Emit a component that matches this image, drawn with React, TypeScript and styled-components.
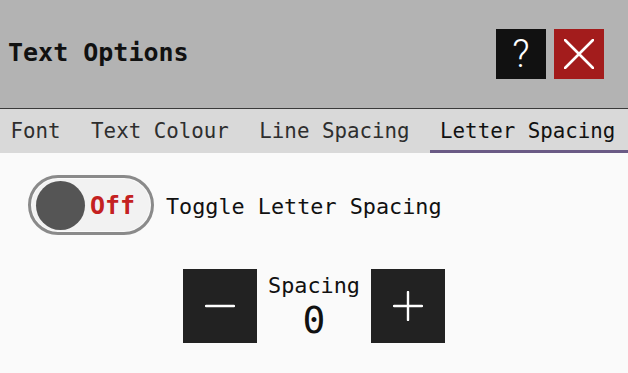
import React, { useState } from "react";
import styled, { createGlobalStyle } from "styled-components";

const Global = createGlobalStyle`
  html, body { margin: 0; padding: 0; background: #fafafa; }
  body { font-family: "DejaVu Sans Mono", "Liberation Mono", monospace; color: #111; }
  * { box-sizing: border-box; }
`;

const Page = styled.div`
  width: 628px;
  height: 373px;
  display: flex;
  flex-direction: column;
  background: #fafafa;
  overflow: hidden;
`;

const Header = styled.header`
  height: 109px;
  flex: none;
  display: flex;
  align-items: center;
  justify-content: space-between;
  padding: 0 24px 0 8px;
  background: #b3b3b3;
  border-bottom: 1px solid #3a3a3a;
`;

const Title = styled.h1`
  margin: 0;
  font-size: 25px;
  font-weight: 700;
  color: #111;
  letter-spacing: 0;
  padding-bottom: 3px;
`;

const HeaderButtons = styled.div`
  display: flex;
  gap: 8px;
`;

const IconButton = styled.button<{ $bg: string }>`
  width: 50px;
  height: 50px;
  border: none;
  padding: 0;
  margin: 0;
  display: flex;
  align-items: center;
  justify-content: center;
  background: ${(p) => p.$bg};
  color: #fff;
  cursor: pointer;
`;

const HelpGlyph = styled.span`
  font-family: "Roboto", "DejaVu Sans", sans-serif;
  font-weight: 300;
  font-size: 38px;
  line-height: 1;
  color: #fff;
`;

const TabBar = styled.nav`
  height: 44px;
  flex: none;
  display: flex;
  gap: 10px;
  background: #d9d9d9;
`;

const Tab = styled.div<{ $active?: boolean }>`
  display: flex;
  align-items: center;
  padding: 3px 10px 0 10.5px;
  font-size: 20.8px;
  color: ${(p) => (p.$active ? "#111" : "#2e2e2e")};
  border-bottom: 3px solid ${(p) => (p.$active ? "#6a5a85" : "transparent")};
  white-space: nowrap;
  flex: ${(p) => (p.$active ? "1" : "none")};
`;

const Body = styled.main`
  flex: 1;
  display: flex;
  flex-direction: column;
  padding: 22px 0 0 28px;
`;

const ToggleRow = styled.div`
  display: flex;
  align-items: center;
  gap: 12px;
`;

const Toggle = styled.button`
  width: 126px;
  height: 60px;
  border: 3px solid #8a8a8a;
  border-radius: 30px;
  background: #f2f2f2;
  box-shadow: inset 0 0 0 1px #fafafa;
  display: flex;
  align-items: center;
  gap: 5px;
  padding: 0 0 0 5px;
  cursor: pointer;
  font-family: inherit;
`;

const Knob = styled.span`
  width: 49px;
  height: 49px;
  border-radius: 50%;
  background: #555;
  flex: none;
`;

const ToggleText = styled.span`
  font-size: 25px;
  font-weight: 700;
  color: #c42121;
`;

const ToggleLabel = styled.span`
  font-size: 21.8px;
  color: #111;
  padding-top: 2px;
`;

const Stepper = styled.div`
  margin: 34px 0 0 -28px;
  display: flex;
  justify-content: center;
  align-items: center;
  gap: 11px;
`;

const StepButton = styled.button`
  width: 74px;
  height: 74px;
  border: none;
  padding: 0;
  background: #222;
  display: flex;
  align-items: center;
  justify-content: center;
  cursor: pointer;
`;

const ValueBox = styled.div`
  width: 92px;
  display: flex;
  flex-direction: column;
  align-items: center;
`;

const ValueLabel = styled.span`
  font-size: 21.8px;
  color: #111;
  line-height: 28px;
`;

const Value = styled.span`
  font-size: 38px;
  color: #111;
  line-height: 40px;
`;

export default function App() {
  const [on, setOn] = useState(false);
  const [spacing, setSpacing] = useState(0);
  return (
    <Page>
      <Global />
      <Header>
        <Title>Text Options</Title>
        <HeaderButtons>
          <IconButton $bg="#111111" aria-label="Help">
            <HelpGlyph>?</HelpGlyph>
          </IconButton>
          <IconButton $bg="#a31c1c" aria-label="Close">
            <svg width="30" height="30" viewBox="0 0 30 30">
              <path d="M1 1 L29 29 M29 1 L1 29" stroke="#fff" strokeWidth="2.6" strokeLinecap="round" />
            </svg>
          </IconButton>
        </HeaderButtons>
      </Header>
      <TabBar>
        <Tab>Font</Tab>
        <Tab>Text Colour</Tab>
        <Tab>Line Spacing</Tab>
        <Tab $active>Letter Spacing</Tab>
      </TabBar>
      <Body>
        <ToggleRow>
          <Toggle onClick={() => setOn(!on)}>
            <Knob />
            <ToggleText>{on ? "On" : "Off"}</ToggleText>
          </Toggle>
          <ToggleLabel>Toggle Letter Spacing</ToggleLabel>
        </ToggleRow>
        <Stepper>
          <StepButton aria-label="Decrease" onClick={() => setSpacing(spacing - 1)}>
            <svg width="30" height="4" viewBox="0 0 30 4">
              <path d="M1 2 H29" stroke="#fff" strokeWidth="2.4" strokeLinecap="round" />
            </svg>
          </StepButton>
          <ValueBox>
            <ValueLabel>Spacing</ValueLabel>
            <Value>{spacing}</Value>
          </ValueBox>
          <StepButton aria-label="Increase" onClick={() => setSpacing(spacing + 1)}>
            <svg width="30" height="30" viewBox="0 0 30 30">
              <path d="M1 15 H29 M15 1 V29" stroke="#fff" strokeWidth="2.4" strokeLinecap="round" />
            </svg>
          </StepButton>
        </Stepper>
      </Body>
    </Page>
  );
}
